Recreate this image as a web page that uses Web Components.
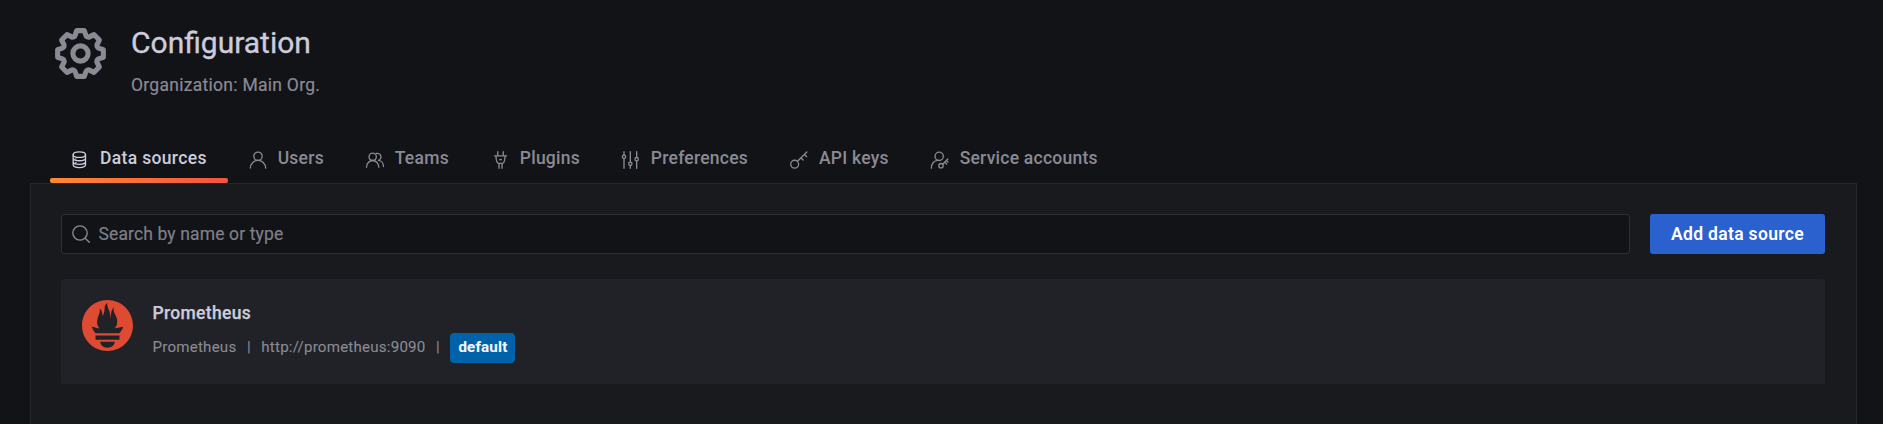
<!DOCTYPE html>
<html lang="en">
<head>
<meta charset="utf-8">
<title>Configuration</title>
<style>
html,body{margin:0;height:100%;background:#121317;overflow:hidden}
body{font-family:Roboto,"Liberation Sans",sans-serif;color:#ccccdc;-webkit-font-smoothing:antialiased}
</style>
</head>
<body>
<config-page></config-page>
<script>
const define = (name, html) => {
  const t = document.createElement('template');
  t.innerHTML = html;
  customElements.define(name, class extends HTMLElement {
    constructor() {
      super();
      this.attachShadow({ mode: 'open' }).append(t.content.cloneNode(true));
    }
  });
};

const ICONS = {
  cog: '<path fill="currentColor" stroke="none" d="M21.32,9.55l-1.89-.63.89-1.78A1,1,0,0,0,20.13,6L18,3.87a1,1,0,0,0-1.15-.19l-1.78.89-.63-1.89A1,1,0,0,0,13.5,2h-3a1,1,0,0,0-.95.68L8.92,4.57,7.14,3.68A1,1,0,0,0,6,3.87L3.87,6a1,1,0,0,0-.19,1.15l.89,1.78-1.89.63A1,1,0,0,0,2,10.5v3a1,1,0,0,0,.68.95l1.89.63-.89,1.78A1,1,0,0,0,3.87,18L6,20.13a1,1,0,0,0,1.15.19l1.78-.89.63,1.89a1,1,0,0,0,.95.68h3a1,1,0,0,0,.95-.68l.63-1.89,1.78.89A1,1,0,0,0,18,20.13L20.13,18a1,1,0,0,0,.19-1.15l-.89-1.78,1.89-.63A1,1,0,0,0,22,13.5v-3A1,1,0,0,0,21.32,9.55ZM20,12.78l-1.2.4A2,2,0,0,0,17.64,16l.57,1.14-1.1,1.1L16,17.64a2,2,0,0,0-2.79,1.16l-.4,1.2H11.22l-.4-1.2A2,2,0,0,0,8,17.64l-1.14.57-1.1-1.1L6.36,16A2,2,0,0,0,5.2,13.18L4,12.78V11.22l1.2-.4A2,2,0,0,0,6.36,8L5.79,6.89l1.1-1.1L8,6.36A2,2,0,0,0,10.82,5.2l.4-1.2h1.56l.4,1.2A2,2,0,0,0,16,6.36l1.14-.57,1.1,1.1L17.64,8a2,2,0,0,0,1.16,2.79l1.2.4ZM12,8a4,4,0,1,0,4,4A4,4,0,0,0,12,8Zm0,6a2,2,0,1,1,2-2A2,2,0,0,1,12,14Z"/>',
  database: '<ellipse cx="11.2" cy="5.6" rx="7.4" ry="3.3"/><path d="M3.8 5.6v12.2c0 1.9 3.3 3.3 7.4 3.3s7.4-1.4 7.4-3.3V5.6M3.8 9.9c0 1.7 3.3 3 7.4 3s7.4-1.3 7.4-3M3.8 14.2c0 1.7 3.3 3 7.4 3s7.4-1.3 7.4-3"/><path d="M7 10.8v.1M7 15v.1"/>',
  user: '<circle cx="12" cy="7.5" r="5"/><path d="M2.8 21.7a9.2 9.2 0 0 1 18.4 0"/>',
  users: '<circle cx="9.2" cy="8.2" r="4.4"/><path d="M1.8 20.6c0-4.4 3.3-8 7.4-8s7.4 3.6 7.4 8M13.6 4.2a4.3 4.3 0 1 1 2.6 8.2c3.6.4 6 3.8 6 7.4"/>',
  plug: '<path d="M9.3 2v4.6M15.9 2v4.6M5.4 7h14.4M7.2 7c0 5 1.2 9 3.4 9h4c2.2 0 3.4-4 3.4-9M10.8 16V22M14.4 16V22M11.6 11.6h2"/>',
  sliders: '<path d="M3.6 2v4.2M3.6 10.2V22M11.2 2v12.6M11.2 18.6V22M18.8 2v7M18.8 13V22"/><circle cx="3.6" cy="8.2" r="2"/><circle cx="11.2" cy="16.6" r="2"/><circle cx="18.8" cy="11" r="2"/>',
  key: '<circle cx="6.8" cy="17" r="4.7"/><path d="M10.2 13.6 21.4 2.4M14.4 9.5l2.6 2.6M18.6 5.4l2.6 2.6"/>',
  account: '<circle cx="11" cy="7.6" r="5"/><path d="M1.6 21.8c0-5 3-9.2 7.8-9.4"/><circle cx="13.2" cy="18.8" r="2.6"/><path d="m15.1 17 6.3-6.2M17.6 14.5l2.4 2.4M19.6 12.5l2 2"/>',
  search: '<circle cx="10.8" cy="10.8" r="8.6"/><path d="m17 17 5 5"/>'
};

customElements.define('ui-icon', class extends HTMLElement {
  connectedCallback() {
    if (this.shadowRoot) return;
    this.attachShadow({ mode: 'open' }).innerHTML =
      `<style>:host{display:block;flex:none;width:var(--size,20px);height:var(--size,20px)}svg{display:block;width:100%;height:100%}</style>
       <svg viewBox="0 0 24 24" fill="none" stroke="currentColor" stroke-width="1.6" stroke-linecap="round" stroke-linejoin="round">${ICONS[this.getAttribute('name')]}</svg>`;
  }
});

define('prometheus-logo', `
<style>:host{display:block;width:51px;height:51px;flex:none;color:#de4a32}svg{display:block}</style>
<svg width="51" height="51" viewBox="0 0 24 24" fill="currentColor"><path d="M12 0C5.373 0 0 5.372 0 12c0 6.627 5.373 12 12 12s12-5.373 12-12c0-6.628-5.373-12-12-12zm0 22.46c-1.885 0-3.414-1.26-3.414-2.814h6.828c0 1.553-1.528 2.813-3.414 2.813zm5.64-3.745H6.36v-2.046h11.28v2.046zm-.04-3.098H6.391c-.037-.043-.075-.086-.111-.13-1.155-1.401-1.427-2.133-1.69-2.879-.005-.025 1.4.287 2.395.511 0 0 .513.119 1.262.255-.72-.843-1.147-1.915-1.147-3.01 0-2.406 1.845-4.508 1.18-6.207.648.053 1.34 1.367 1.387 3.422.689-.951.977-2.69.977-3.755 0-1.103.727-2.385 1.454-2.429-.648 1.069.168 1.984.894 4.256.272.854.237 2.29.447 3.201.07-1.892.395-4.652 1.595-5.605-.529 1.2.079 2.702.494 3.424.671 1.164 1.078 2.047 1.078 3.716a4.642 4.642 0 0 1-1.11 2.996c.792-.149 1.34-.283 1.34-.283l2.573-.502s-.374 1.538-1.81 3.019z"/></svg>`);

define('page-header', `
<style>
:host{display:flex;gap:20px;height:117.5px;padding:22.5px 0 0 50px;color:#8a8a94}
ui-icon{--size:61px}
h1{margin:.5px 0 0;font-size:30px;line-height:40px;font-weight:400;color:#ccccdc;-webkit-text-stroke:.35px currentColor}
p{margin:11px 0 0;font-size:17.5px;line-height:22px;letter-spacing:.28px;-webkit-text-stroke:.2px currentColor}
</style>
<ui-icon name="cog"></ui-icon>
<div><h1><slot name="title"></slot></h1><p><slot name="subtitle"></slot></p></div>`);

define('nav-tab', `
<style>
:host{display:flex;position:relative;align-items:center;gap:10px;padding:0 20.9px 5px 20px;height:43px;box-sizing:border-box;color:#8a8a94;font-size:17.5px;font-weight:500;letter-spacing:.24px;line-height:22px;white-space:nowrap}
:host([active]){color:#ccccdc;letter-spacing:.34px}
:host([active])::after{content:"";position:absolute;left:0;right:0;bottom:0;height:5px;border-radius:2px;background:linear-gradient(90deg,#ff8833,#f5533f)}
span{margin-top:-2px}
::slotted(ui-icon){margin-top:1px}
</style>
<slot name="icon"></slot><span><slot></slot></span>`);

define('tab-bar', `
<style>
:host{display:flex;height:43px;margin-left:50px}
</style>
<slot></slot>`);

define('content-panel', `
<style>
:host{display:block;box-sizing:border-box;margin:0 26px 0 30px;height:260px;padding:30px 31px 30px 30px;border:1px solid #26272b;background:#191a1e}
</style>
<slot></slot>`);

define('search-field', `
<style>
:host{display:flex;align-items:center;flex:1;box-sizing:border-box;height:40px;padding-left:9px;gap:7.5px;border:1px solid #303136;border-radius:3px;background:#121317;color:#7f7f88;font-size:17.5px;letter-spacing:.13px;-webkit-text-stroke:.2px currentColor}
ui-icon{color:#8b8b94}
span{margin-top:-1px}
</style>
<ui-icon name="search"></ui-icon><span><slot></slot></span>`);

define('primary-button', `
<style>
:host{display:flex;align-items:center;justify-content:center;box-sizing:border-box;width:175px;height:40px;padding-bottom:1px;border-radius:3px;background:#2b61cf;color:#fff;font-size:17.5px;font-weight:600;letter-spacing:.33px;white-space:nowrap}
</style>
<slot></slot>`);

define('tool-bar', `
<style>:host{display:flex;gap:20px;height:40px}</style><slot></slot>`);

define('status-badge', `
<style>
:host{display:block;box-sizing:border-box;width:65px;height:30.5px;border-radius:4px;background:#0062a9;color:#f4f6fb;text-align:center;font-size:15.1px;font-weight:700;letter-spacing:.2px;line-height:28px}
</style><slot></slot>`);

define('source-card', `
<style>
:host{display:flex;gap:19.5px;box-sizing:border-box;height:105px;margin-top:25px;padding:21px;border-radius:3px;background:#212227}
h2{margin:1px 0 0;font-size:17.5px;line-height:24px;font-weight:500;letter-spacing:.32px;-webkit-text-stroke:.25px currentColor}
.meta{display:flex;align-items:center;gap:10.5px;margin-top:8px;height:30px;font-size:15.1px;letter-spacing:.22px;line-height:28px;color:#8a8a94;-webkit-text-stroke:.1px currentColor}
.meta span{height:30px}
</style>
<prometheus-logo></prometheus-logo>
<div><h2><slot name="name"></slot></h2>
<div class="meta"><span><slot name="type"></slot></span><span>|</span><span><slot name="url"></slot></span><span>|</span><slot name="badge"></slot></div></div>`);

define('config-page', `
<style>:host{display:block}</style>
<page-header><span slot="title">Configuration</span><span slot="subtitle">Organization: Main Org.</span></page-header>
<tab-bar>
<nav-tab active><ui-icon slot="icon" name="database"></ui-icon>Data sources</nav-tab>
<nav-tab><ui-icon slot="icon" name="user"></ui-icon>Users</nav-tab>
<nav-tab><ui-icon slot="icon" name="users"></ui-icon>Teams</nav-tab>
<nav-tab><ui-icon slot="icon" name="plug"></ui-icon>Plugins</nav-tab>
<nav-tab><ui-icon slot="icon" name="sliders"></ui-icon>Preferences</nav-tab>
<nav-tab><ui-icon slot="icon" name="key"></ui-icon>API keys</nav-tab>
<nav-tab><ui-icon slot="icon" name="account"></ui-icon>Service accounts</nav-tab>
</tab-bar>
<content-panel>
<tool-bar><search-field>Search by name or type</search-field><primary-button>Add data source</primary-button></tool-bar>
<source-card><span slot="name">Prometheus</span><span slot="type">Prometheus</span><span slot="url">http://prometheus:9090</span><status-badge slot="badge">default</status-badge></source-card>
</content-panel>`);
</script>
</body>
</html>
